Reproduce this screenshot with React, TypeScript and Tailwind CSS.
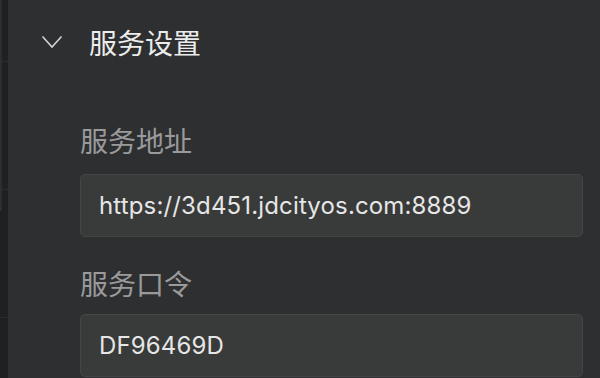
const cjk = { fontFamily: '"Noto Sans CJK SC", "Noto Sans", sans-serif' };
const latin = { fontFamily: 'Inter, "Noto Sans CJK SC", sans-serif' };

function Field({ label, value, labelClass }: { label: string; value: string; labelClass: string }) {
  return (
    <div className="flex flex-col">
      <div className={`text-[28px] leading-[36px] text-[#9a9a9a] ${labelClass}`} style={cjk}>
        {label}
      </div>
      <div className="h-[63px] rounded-[5px] border border-[#444646] bg-[#393a3a] flex items-center pl-[18px]">
        <span className="text-[24px] tracking-[0.15px] text-[#e6e6e6]" style={latin}>
          {value}
        </span>
      </div>
    </div>
  );
}

export default function App() {
  return (
    <div className="flex h-[378px] w-[600px] overflow-hidden bg-[#2e2f31]">
      {/* left edge of neighbouring panel */}
      <div className="relative w-[8px] shrink-0 bg-[#1f2023] flex flex-col">
        <div className="absolute left-0 top-0 h-[211px] w-[2px] bg-[#2d2e30]" />
        <div className="h-[62px] border-b border-[#2a2b2d]" />
        <div className="h-[128px] border-b border-[#2a2b2d]" />
        <div className="h-[128px] border-b border-[#2a2b2d]" />
      </div>

      <div className="flex-1 flex flex-col">
        {/* section header */}
        <div className="h-[84px] flex items-center">
          <svg width="22" height="14" viewBox="0 0 22 14" className="ml-[33px]">
            <polyline points="1.5,1.5 11,12 20.5,1.5" fill="none" stroke="#d4d4d4" strokeWidth="1.6" />
          </svg>
          <span className="ml-[26px] text-[28px] text-[#ececec]" style={cjk}>
            服务设置
          </span>
        </div>

        <div className="flex flex-col pl-[72px] pr-[17px]">
          <div className="mt-[38px]">
            <Field label="服务地址" value="https://3d451.jdcityos.com:8889" labelClass="mb-[16px]" />
          </div>
          <div className="mt-[28px]">
            <Field label="服务口令" value="DF96469D" labelClass="mb-[13px]" />
          </div>
        </div>
      </div>
    </div>
  );
}
